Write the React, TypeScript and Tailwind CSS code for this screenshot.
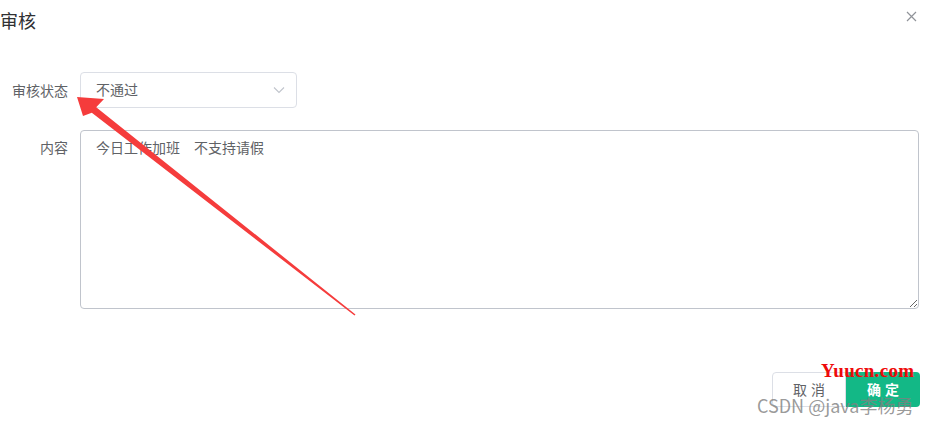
import React from "react";

const cjk = { fontFamily: '"Noto Sans CJK SC", "Liberation Sans", sans-serif' };

export default function App() {
  return (
    <div className="relative w-[930px] h-[426px] bg-white overflow-hidden" style={cjk}>
      {/* header */}
      <div className="flex h-[40px] items-center justify-between pr-[13px]">
        <div className="text-[18px] leading-none text-[#303133]">审核</div>
        <svg width="11" height="11" viewBox="0 0 11 11" className="-mt-[8px]">
          <path d="M1 1 L10 10 M10 1 L1 10" stroke="#909399" strokeWidth="1.2" fill="none" />
        </svg>
      </div>

      {/* form */}
      <div className="mt-[32px] flex flex-col gap-[22px]">
        <div className="flex items-center">
          <div className="w-[68px] text-right text-[14px] text-[#606266]">审核状态</div>
          <div className="ml-[12px] flex h-[36px] w-[217px] items-center justify-between rounded-[4px] border border-[#dcdfe6] pl-[15px] pr-[11px]">
            <span className="-mt-[2px] text-[14px] text-[#606266]">不通过</span>
            <svg width="12" height="8" viewBox="0 0 12 8">
              <path d="M1 1.5 L6 6.5 L11 1.5" stroke="#c0c4cc" strokeWidth="1.1" fill="none" />
            </svg>
          </div>
        </div>
        <div className="flex items-start">
          <div className="w-[68px] pt-[7px] text-right text-[14px] text-[#606266]">内容</div>
          <textarea
            readOnly
            defaultValue={"今日工作加班　不支持请假"}
            className="ml-[12px] h-[179px] w-[839px] rounded-[4px] border border-[#c0c4cc] px-[15px] py-[5px] text-[14px] leading-[22px] text-[#606266] outline-none resize"
            style={cjk}
          />
        </div>
      </div>

      {/* footer */}
      <div className="mt-[63px] flex justify-end pr-[10px]">
        <button className="h-[35px] w-[74px] rounded-l-[4px] border border-[#dcdfe6] bg-white text-[14px] tracking-[4px] text-[#606266]">
          <span className="pl-[4px]">取消</span>
        </button>
        <button className="h-[35px] w-[74px] rounded-r-[4px] bg-[#13b886] text-[14px] font-bold tracking-[4px] text-white">
          <span className="pl-[4px]">确定</span>
        </button>
      </div>

      {/* annotation arrow */}
      <svg className="pointer-events-none absolute left-0 top-0" width="930" height="426">
        <polygon
          points="77,97 83,116 91.8,112.8 354.5,315.5 355.5,314.5 96.2,107.2 104,99"
          fill="#f53c3c"
        />
      </svg>

      {/* watermarks */}
      <div
        className="pointer-events-none absolute left-[821px] top-[361px] text-[19px] font-bold leading-none tracking-[0.3px] text-[#ee0a0a]"
        style={{ fontFamily: '"Liberation Serif", serif' }}
      >
        Yuucn.com
      </div>
      <div
        className="pointer-events-none absolute left-[757px] top-[396px] text-[18px] leading-none text-[#808080]/80"
        style={cjk}
      >
        CSDN @java李杨勇
      </div>
    </div>
  );
}
